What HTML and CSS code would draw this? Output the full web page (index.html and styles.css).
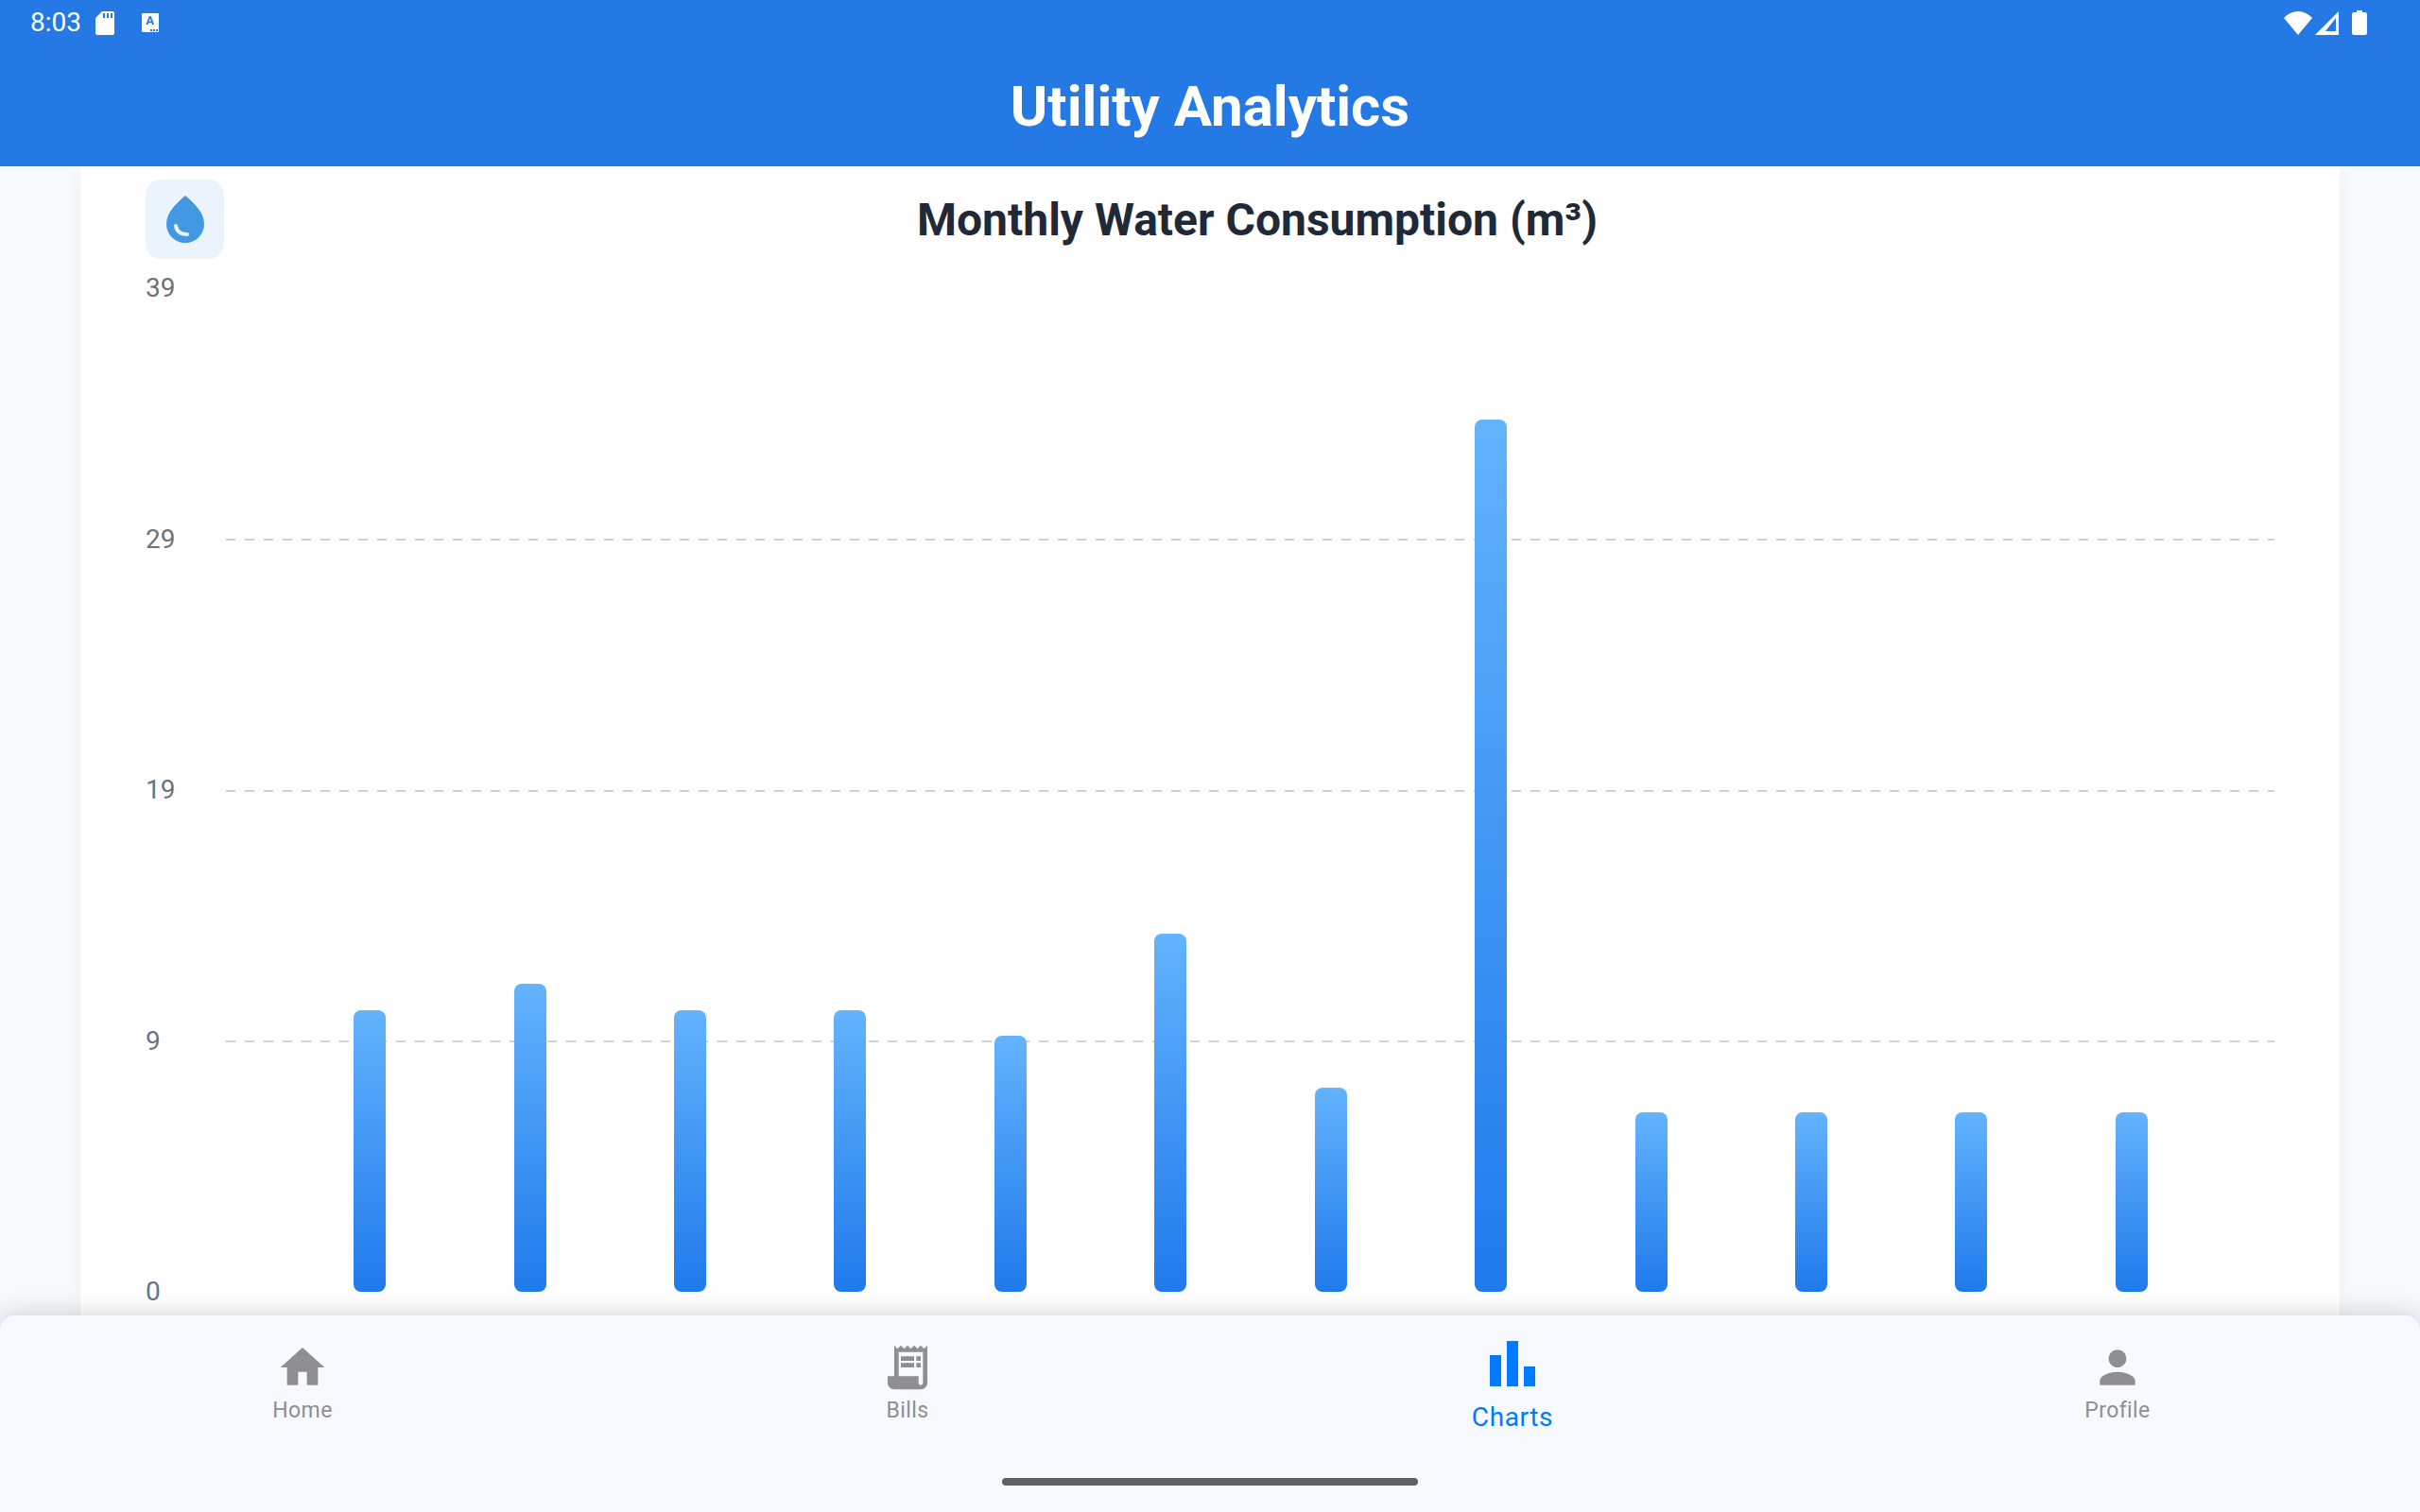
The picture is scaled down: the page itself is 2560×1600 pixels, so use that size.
FILE: index.html
```html
<!DOCTYPE html>
<html lang="en">
<head>
    <meta charset="UTF-8">
    <meta name="viewport" content="width=device-width, initial-scale=1.0">
    <title>Utility Analytics</title>
    <link rel="stylesheet" href="styles.css">
</head>
<body>
    <header class="app-header">
        <div class="status-bar">
            <div class="status-left">
                <span class="clock">8:03</span>
                <svg class="sd-icon" viewBox="0 0 20 25"><path fill="#fff" fill-rule="evenodd" d="M7 0h11a2 2 0 0 1 2 2v21a2 2 0 0 1-2 2H2a2 2 0 0 1-2-2V7zM8 2v5h2V2zm4 0v5h2V2zm4 0v5h2V2z"/></svg>
                <span class="a-icon">A</span>
            </div>
            <div class="status-right">
                <svg class="wifi-icon" viewBox="0 0 30 25"><path fill="#fff" d="M15 25 0 7C4 3 9 0 15 0s11 3 15 7z"/></svg>
                <svg class="signal-icon" viewBox="0 0 25 25"><path fill="#fff" fill-rule="evenodd" d="M25 0v25H0zM22 7 11 21h11z"/></svg>
                <svg class="battery-icon" viewBox="0 0 16 26"><path fill="#fff" d="M5 0h6v2h3a2 2 0 0 1 2 2v20a2 2 0 0 1-2 2H2a2 2 0 0 1-2-2V4a2 2 0 0 1 2-2h3z"/></svg>
            </div>
        </div>
        <h1 class="app-title">Utility Analytics</h1>
    </header>

    <main class="content">
        <section class="card">
            <div class="card-head">
                <div class="drop-box">
                    <svg class="drop-icon" viewBox="0 0 40 50"><path fill="#4299e1" d="M20 0C12 7 0 17 0 30a20 20 0 0 0 40 0C40 17 28 7 20 0z"/><path fill="none" stroke="#ebf4fc" stroke-width="4" stroke-linecap="round" d="M10 32c1 6 5 9 12 9"/></svg>
                </div>
                <h2 class="card-title">Monthly Water Consumption (m³)</h2>
            </div>
            <div class="chart">
                <div class="grid-row"><span class="axis-label">39</span></div>
                <div class="grid-row"><span class="axis-label">29</span><span class="grid-line"></span></div>
                <div class="grid-row"><span class="axis-label">19</span><span class="grid-line"></span></div>
                <div class="grid-row"><span class="axis-label">9</span><span class="grid-line"></span></div>
                <div class="grid-row"><span class="axis-label">0</span></div>
                <div class="bars">
                    <div class="slot"><div class="bar" style="height: 298px"></div></div>
                    <div class="slot"><div class="bar" style="height: 326px"></div></div>
                    <div class="slot"><div class="bar" style="height: 298px"></div></div>
                    <div class="slot"><div class="bar" style="height: 298px"></div></div>
                    <div class="slot"><div class="bar" style="height: 271px"></div></div>
                    <div class="slot"><div class="bar" style="height: 379px"></div></div>
                    <div class="slot"><div class="bar" style="height: 216px"></div></div>
                    <div class="slot"><div class="bar" style="height: 923px"></div></div>
                    <div class="slot"><div class="bar" style="height: 190px"></div></div>
                    <div class="slot"><div class="bar" style="height: 190px"></div></div>
                    <div class="slot"><div class="bar" style="height: 190px"></div></div>
                    <div class="slot"><div class="bar" style="height: 190px"></div></div>
                </div>
            </div>
        </section>
    </main>

    <nav class="bottom-nav">
        <a class="nav-item">
            <svg class="nav-icon" viewBox="0 0 24 24"><path d="M10 20v-6h4v6h5v-8h3L12 3 2 12h3v8z"/></svg>
            <span class="nav-label">Home</span>
        </a>
        <a class="nav-item">
            <svg class="nav-icon" viewBox="0 0 24 24"><path d="M19.5 3.5 18 2l-1.5 1.5L15 2l-1.5 1.5L12 2l-1.5 1.5L9 2 7.5 3.5 6 2v14H3v3c0 1.66 1.34 3 3 3h12c1.66 0 3-1.34 3-3V2l-1.5 1.5zM19 19c0 .55-.45 1-1 1s-1-.45-1-1v-3H8V5h11v14z"/><path d="M9 7h6v2H9zm7 0h2v2h-2zm-7 3h6v2H9zm7 0h2v2h-2z"/></svg>
            <span class="nav-label">Bills</span>
        </a>
        <a class="nav-item active">
            <svg class="nav-icon" viewBox="0 0 56 56"><path d="M4 15h12v33H4zM22 0h12v48H22zM40 27h12v21H40z"/></svg>
            <span class="nav-label">Charts</span>
        </a>
        <a class="nav-item">
            <svg class="nav-icon" viewBox="0 0 24 24"><path d="M12 12c2.21 0 4-1.79 4-4s-1.79-4-4-4-4 1.79-4 4 1.79 4 4 4zm0 2c-2.67 0-8 1.34-8 4v2h16v-2c0-2.66-5.33-4-8-4z"/></svg>
            <span class="nav-label">Profile</span>
        </a>
        <div class="home-handle"></div>
    </nav>
</body>
</html>
```
FILE: styles.css
```css
* {
    box-sizing: border-box;
}
body {
    font-family: Roboto, sans-serif;
    background-color: #f7fafd;
    margin: 0;
    width: 2560px;
    height: 1600px;
    overflow: hidden;
    display: flex;
    flex-direction: column;
}
.app-header {
    height: 176px;
    flex-shrink: 0;
    background-color: #2479e4;
    color: #fff;
    position: relative;
    z-index: 1;
}
.status-bar {
    height: 48px;
    padding: 0 56px 0 32px;
    display: flex;
    justify-content: space-between;
    align-items: center;
}
.status-left,
.status-right {
    display: flex;
    align-items: center;
}
.clock {
    font-size: 28px;
    line-height: 48px;
}
.sd-icon {
    width: 20px;
    height: 25px;
    margin-left: 15px;
}
.a-icon {
    position: relative;
    width: 18px;
    height: 20px;
    margin-left: 29px;
    padding-right: 1px;
    background-color: #fff;
    color: #2479e4;
    font-size: 13px;
    font-weight: 700;
    line-height: 16px;
    text-align: center;
    border-radius: 1px;
}
.a-icon::after {
    content: "";
    position: absolute;
    right: 1px;
    bottom: 1px;
    width: 8px;
    height: 2px;
    background-image: repeating-linear-gradient(90deg, #2479e4 0 2px, transparent 2px 3px);
}
.wifi-icon {
    width: 30px;
    height: 25px;
}
.signal-icon {
    width: 25px;
    height: 25px;
    margin-left: 3px;
}
.battery-icon {
    width: 16px;
    height: 26px;
    margin-left: 14px;
}
.app-title {
    margin: 0;
    font-size: 60px;
    font-weight: 700;
    line-height: 130px;
    text-align: center;
}
.content {
    flex: 1;
    padding: 0 85px;
    min-height: 0;
}
.card {
    height: 100%;
    background-color: #fff;
    box-shadow: 0 0 16px rgba(0, 0, 0, 0.04);
    padding: 14px 69px 0;
}
.card-head {
    display: flex;
    align-items: center;
}
.drop-box {
    width: 83px;
    height: 84px;
    flex-shrink: 0;
    background-color: #ebf4fc;
    border-radius: 16px;
    display: flex;
    align-items: center;
    justify-content: center;
}
.drop-icon {
    width: 40px;
    height: 50px;
}
.card-title {
    flex: 1;
    margin: 0 0 0 17px;
    font-size: 48px;
    font-weight: 700;
    color: #1f2937;
    text-align: center;
}
.chart {
    position: relative;
    height: 1064px;
    margin-top: 30.5px;
    display: flex;
    flex-direction: column;
    justify-content: space-between;
}
.grid-row {
    height: 2px;
    display: flex;
    align-items: center;
}
.axis-label {
    width: 85px;
    flex-shrink: 0;
    padding-bottom: 2px;
    font-size: 28px;
    color: #6b7280;
}
.grid-line {
    flex: 1;
    height: 2px;
    background-image: repeating-linear-gradient(90deg, #d1d1d6 0 10px, transparent 10px 20px);
}
.bars {
    position: absolute;
    left: 152.5px;
    right: 66.5px;
    bottom: 1.5px;
    display: flex;
    align-items: flex-end;
}
.slot {
    flex: 1;
    display: flex;
    justify-content: center;
}
.bar {
    width: 34px;
    border-radius: 8px;
    background-image: linear-gradient(180deg, #63b3fd, #1f7aeb);
}
.bottom-nav {
    height: 208px;
    margin-top: -16px;
    flex-shrink: 0;
    position: relative;
    background-color: #f6fafe;
    border-radius: 16px 16px 0 0;
    box-shadow: 0 -4px 24px rgba(0, 0, 0, 0.15);
    display: grid;
    grid-template-columns: repeat(4, 1fr);
}
.nav-item {
    display: flex;
    flex-direction: column;
    align-items: center;
    padding-top: 27px;
    color: #8e8e93;
}
.nav-icon {
    width: 56px;
    height: 56px;
    fill: currentColor;
}
.nav-label {
    font-size: 23px;
    letter-spacing: 0.4px;
    line-height: 26px;
    margin-top: 5px;
}
.nav-item.active {
    color: #007aff;
}
.nav-item.active .nav-label {
    font-size: 28px;
    letter-spacing: 0.6px;
    line-height: 32px;
    margin-top: 9px;
}
.home-handle {
    position: absolute;
    left: 1060px;
    bottom: 28px;
    width: 440px;
    height: 8px;
    border-radius: 4px;
    background-color: #616161;
}
```
